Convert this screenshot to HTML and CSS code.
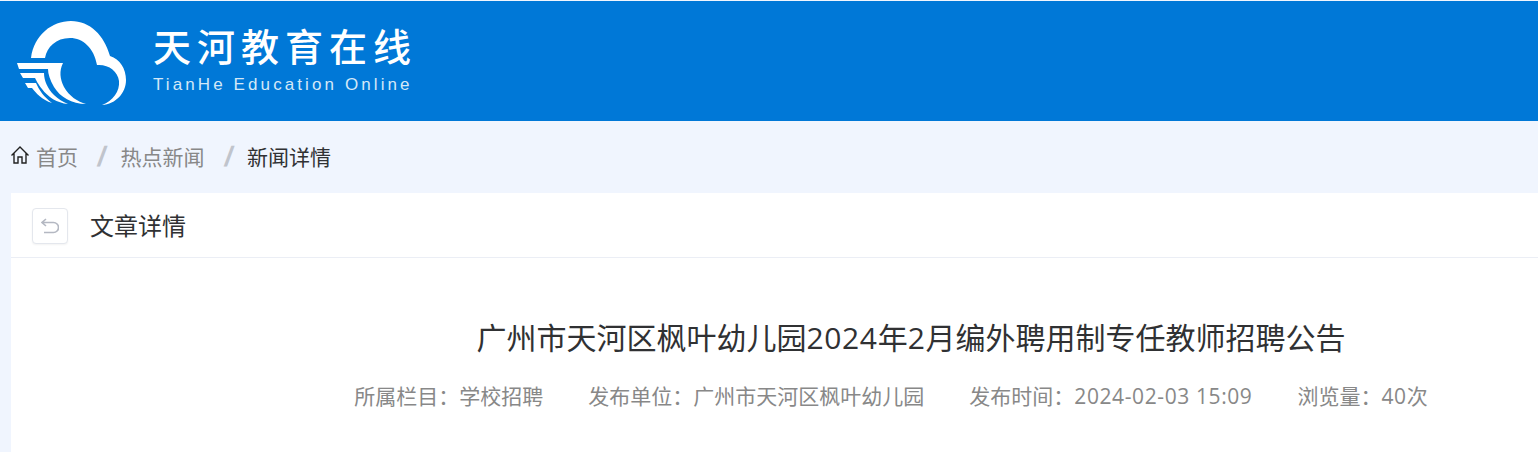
FILE: index.html
```html
<!DOCTYPE html>
<html lang="zh-CN">
    <head>
        <meta charset="UTF-8">
        <meta name="viewport" content="width=device-width, initial-scale=1.0">
        <title>文章详情</title>
        <link rel="stylesheet" href="styles.css">
    </head>
    <body>
        <header class="topbar">
            <svg class="logo-mark" viewBox="0 0 125 95" width="125" height="95">
                <path d="M21 43C24 20 42 6 61 6C80 6 94 20 100 41C110 44 116 54 116 65C116 78 106 89 92 90C103 86 110 76 109 66C108 56 98 49 87 50C84 33 73 23 60 23C46 23 37 32 35 43Z"/>
                <path d="M7 48H53C49 56 50 64 54 72C59 81 68 87 76 89C62 89 50 82 44 72C40 65 38 59 38 54H9Z"/>
                <path d="M10 58H34C34 66 38 74 44 80C48 84 53 87 58 89C47 88 38 82 32 74C28 69 26 65 25 63H13Z"/>
                <path d="M15 68H26C29 75 34 82 42 88C32 85 26 78 22 73H18Z"/>
            </svg>
            <div class="logo-text">
                <div class="logo-cn">天河教育在线</div>
                <div class="logo-en">TianHe Education Online</div>
            </div>
        </header>

        <nav class="crumbs">
            <svg class="home-icon" viewBox="0 0 18 18" width="18" height="18">
                <path d="M0.500 9.500L9 1L17.500 9.500M3 7.500V17H7V11H11V17H15V7.500"/>
            </svg>
            <a href="#" class="crumb">首页</a>
            <span class="crumb-sep">/</span>
            <a href="#" class="crumb">热点新闻</a>
            <span class="crumb-sep">/</span>
            <span class="crumb crumb-current">新闻详情</span>
        </nav>

        <main class="card">
            <div class="card-head">
                <button class="back-btn">
                    <svg viewBox="0 0 18 16" width="18" height="16">
                        <path d="M5 1L1 4.500L5 8M1 4.500H12.500A4.700 4.700 0 0 1 12.500 14.500H3"/>
                    </svg>
                </button>
                <h2>文章详情</h2>
            </div>
            <article class="article">
                <h1>广州市天河区枫叶幼儿园<span class="num-lg">2024</span>年<span class="num-lg">2</span>月编外聘用制专任教师招聘公告</h1>
                <div class="meta">
                    <span>所属栏目&#65306;学校招聘</span>
                    <span>发布单位&#65306;广州市天河区枫叶幼儿园</span>
                    <span>发布时间&#65306;<span class="num">2024-02-03 15:09</span></span>
                    <span>浏览量&#65306;<span class="num">40</span>次</span>
                </div>
            </article>
        </main>
    </body>
</html>
```

FILE: styles.css
```css
html, body {
    height: 100%;
}
body {
    margin: 0;
    padding-top: 1px;
    box-sizing: border-box;
    display: flex;
    flex-direction: column;
    overflow: hidden;
    background-color: #f0f5fe;
    font-family: "Open Sans", "Noto Sans CJK SC", sans-serif;
}
.topbar {
    height: 120px;
    flex: none;
    display: flex;
    align-items: center;
    background-color: #0078d7;
}
.logo-mark {
    margin-left: 10px;
    margin-top: 3px;
    fill: #fff;
}
.logo-text {
    margin-left: 18px;
    color: #fff;
}
.logo-cn {
    font-family: "Noto Sans CJK SC", serif;
    font-size: 38px;
    line-height: 46px;
    font-weight: 500;
    letter-spacing: 6px;
    margin-top: -3px;
}
.logo-en {
    font-family: "Liberation Sans", sans-serif;
    font-size: 17px;
    line-height: 24px;
    letter-spacing: 3.1px;
    margin-top: 5px;
    color: #d4e8f8;
}
.crumbs {
    height: 72px;
    flex: none;
    display: flex;
    align-items: center;
    padding-left: 11px;
    padding-bottom: 2px;
    box-sizing: border-box;
    font-size: 21px;
}
.home-icon {
    fill: none;
    stroke: #222;
    stroke-width: 1.4;
    margin-right: 7px;
    margin-bottom: 2px;
}
.crumb {
    color: #888;
    text-decoration: none;
}
.crumb-current {
    color: #303133;
}
.crumb-sep {
    width: 10px;
    margin: 2px 13.500px 0 19px;
    font-family: "Liberation Sans", sans-serif;
    color: #c0c4cc;
    font-size: 28px;
    line-height: 30px;
    font-weight: 700;
    text-align: center;
    transform: skewX(-10deg);
}
.card {
    flex: 1;
    margin-left: 11px;
    background-color: #fff;
}
.card-head {
    height: 64px;
    display: flex;
    align-items: center;
    padding-left: 21px;
    border-bottom: 1px solid #ebeef5;
}
.back-btn {
    width: 36px;
    height: 36px;
    padding: 0;
    margin-top: 2px;
    display: flex;
    align-items: center;
    justify-content: center;
    background: #fff;
    border: 1px solid #e4e7ed;
    border-radius: 4px;
    box-shadow: 0 1px 2px rgba(0, 0, 0, 0.05);
}
.back-btn svg {
    fill: none;
    stroke: #b4b8c2;
    stroke-width: 1.6;
}
.card-head h2 {
    margin: 0 0 2px 22px;
    font-size: 24px;
    font-weight: 400;
    color: #303133;
}
.article {
    padding: 59px 0 0 273px;
}
.article h1 {
    margin: 0;
    text-align: center;
    font-size: 30px;
    line-height: 42px;
    font-weight: 400;
    color: #303133;
}
.num-lg {
    letter-spacing: 0.600px;
}
.num {
    letter-spacing: 0.600px;
}
.meta {
    display: flex;
    justify-content: center;
    gap: 45px;
    margin-top: 22px;
    padding-right: 40px;
    font-size: 21px;
    line-height: 30px;
    color: #888;
}
```
